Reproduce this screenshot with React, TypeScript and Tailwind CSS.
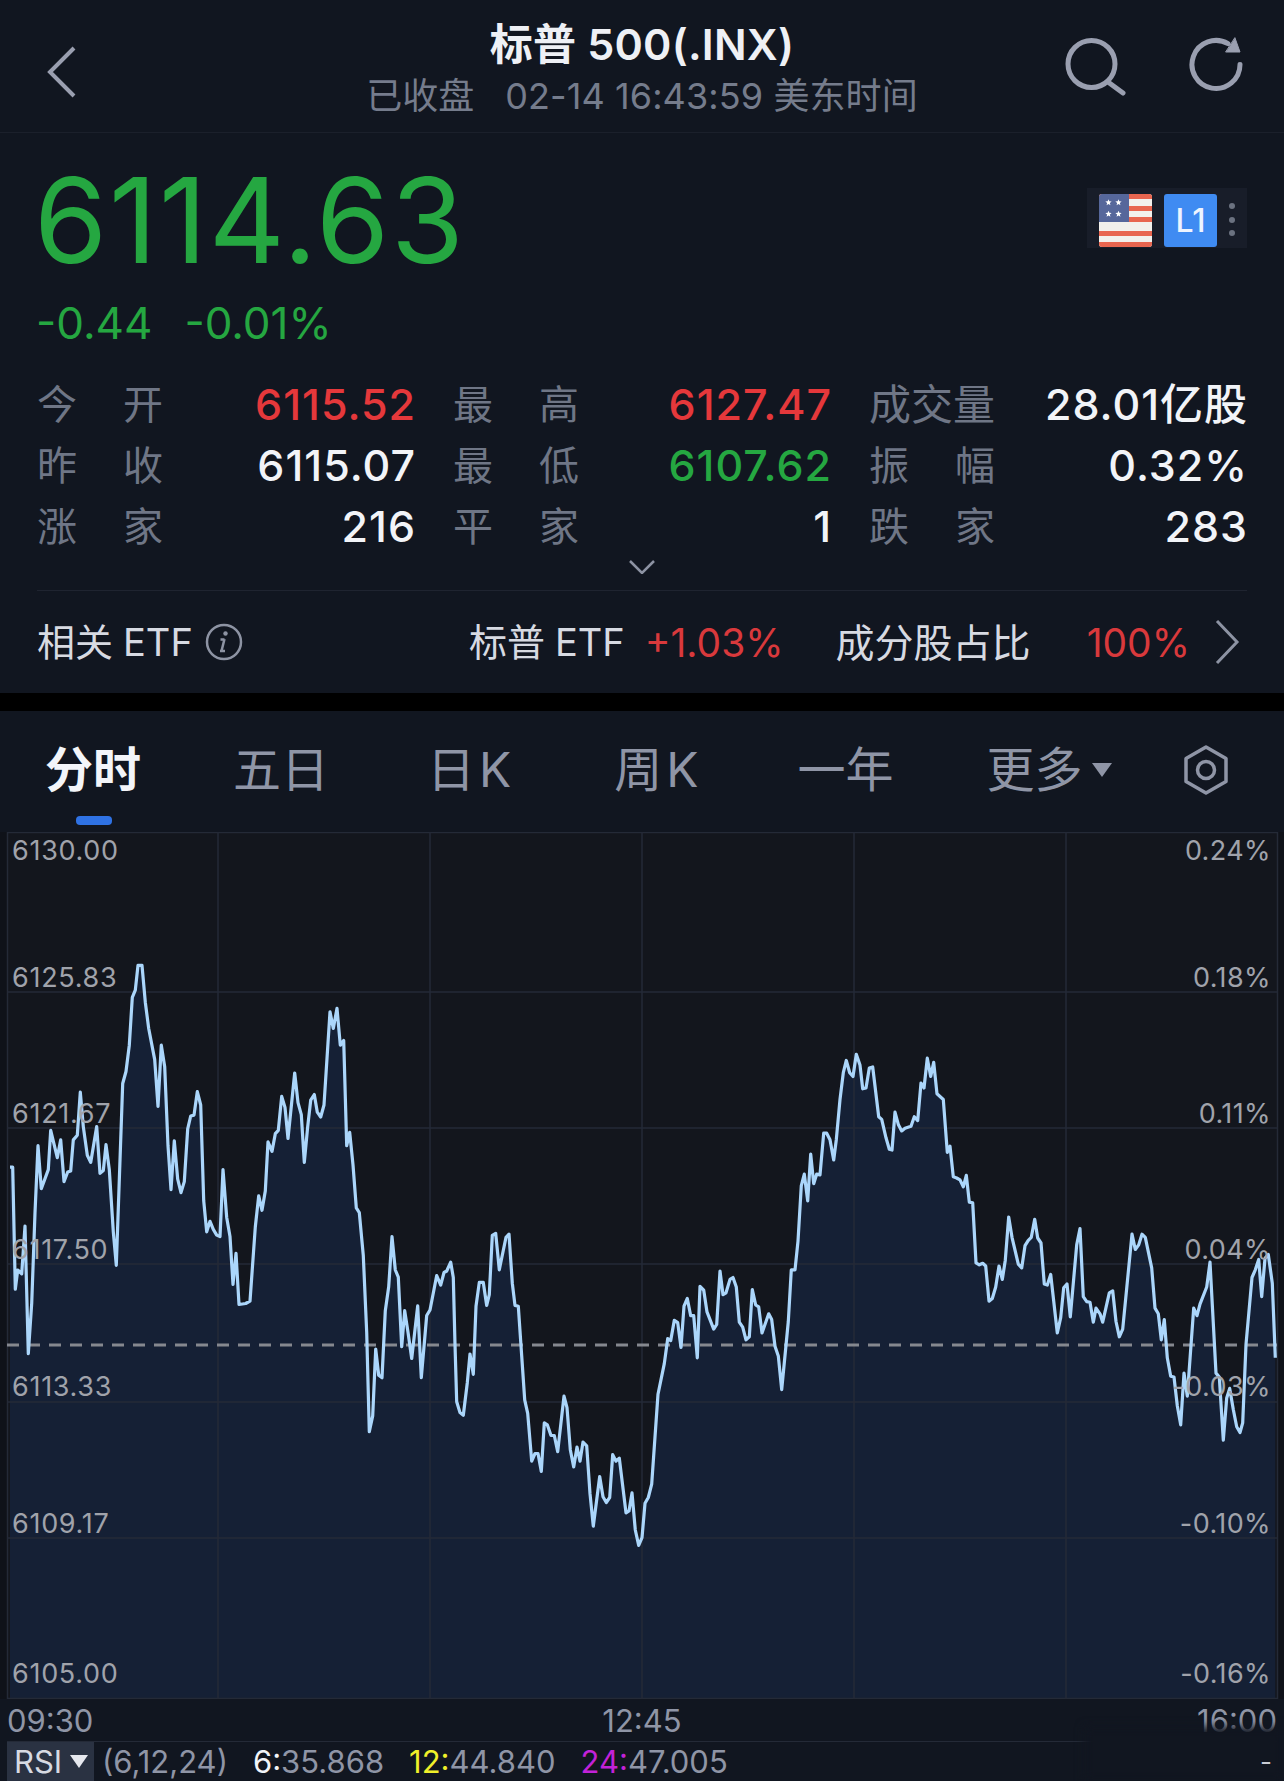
import React from "react";

const FONT = 'font-["Inter","Noto_Sans_CJK_SC",sans-serif]';

const z3 = [[30,705],[38,705],[46,960],[53,920],[65,928],[75,828],[85,1095],[95,990],[105,800],[114,660],[124,750],[145,710],[152,628],[172,685],[182,648],[192,735],[203,715],[212,713],[220,648],[232,638],[241,548],[250,620],[262,680],[272,695],[290,620],[300,718],[310,712],[318,658],[328,710],[340,840],[349,910],[368,530],[378,505],[388,450],[397,350],[406,335],[414,283],[426,283],[436,360],[446,415],[464,480],[474,578],[484,450],[494,495],[504,660],[513,752],[523,650],[533,730],[543,758],[553,735],[563,625],[572,598],[582,596],[592,547],[602,575],[611,775],[620,840],[630,818],[640,835],[650,847],[660,850],[669,710],[680,810],[690,850],[699,950],[708,885],[717,992],[737,990],[750,985],[766,830],[776,765],[786,795],[796,755],[804,652],[816,672],[826,635],[835,628],[845,557],[855,580],[864,645],[884,508],[894,570],[904,595],[913,695],[923,620],[932,565],[943,553],[952,590],[962,600],[972,575],[990,380],[1000,415],[1011,373],[1021,450],[1031,440],[1040,660],[1049,632],[1059,700],[1069,790],[1078,800],[1090,890],[1100,1050],[1108,1258],[1118,1225],[1127,1085],[1136,1140],[1146,1145],[1156,1005],[1166,955],[1176,850],[1186,920],[1195,935],[1205,1080],[1214,1005],[1224,1050],[1235,1105],[1253,995],[1264,1145],[1280,1015]];
const z4 = [[0,810],[20,720],[32,745],[42,712],[50,708],[62,685],[70,725],[75,900],[80,1050],[90,1078],[100,1085],[112,1000],[120,925],[130,978],[138,800],[148,738],[160,738],[170,798],[178,770],[187,615],[197,610],[208,705],[228,620],[237,612],[247,740],[255,798],[265,800],[275,930],[284,1045],[293,1080],[305,1205],[315,1185],[324,1185],[334,1232],[343,1105],[352,1110],[363,1138],[373,1138],[383,1180],[402,1035],[411,1065],[421,1175],[431,1220],[441,1168],[450,1205],[459,1155],[470,1165],[480,1290],[490,1375],[509,1245],[519,1298],[529,1313],[539,1300],[548,1188],[558,1205],[568,1197],[588,1340],[597,1335],[606,1288],[616,1385],[626,1425],[636,1405],[645,1315],[655,1300],[665,1265],[684,1030],[703,950],[713,885],[722,890],[733,837],[743,843],[753,908],[762,800],[772,780],[782,825],[791,825],[802,935],[810,748],[821,758],[831,815],[851,860],[860,848],[870,708],[879,770],[888,765],[900,730],[909,725],[919,750],[928,842],[938,855],[948,888],[958,880],[967,757],[977,797],[986,802],[996,870],[1016,820],[1025,835],[1035,905],[1045,930],[1055,1018],[1075,840],[1084,705],[1095,705],[1104,630],[1114,485],[1123,455],[1133,525],[1142,403],[1151,480],[1160,455],[1170,457],[1181,348],[1190,348],[1200,365],[1211,418],[1219,365],[1230,260],[1240,190],[1249,158],[1259,190],[1269,200],[1279,142]];
const z5 = [[0,170],[8,232],[18,230],[28,178],[38,175],[56,305],[65,312],[78,360],[88,390],[96,392],[105,293],[115,325],[125,342],[135,335],[153,330],[163,305],[173,315],[183,217],[192,230],[202,152],[212,200],[221,163],[231,245],[250,260],[262,398],[270,382],[280,462],[290,465],[300,470],[310,488],[319,458],[328,528],[338,530],[348,687],[358,692],[368,688],[377,695],[387,787],[397,780],[407,750],[417,695],[427,730],[436,680],[446,567],[456,620],[475,690],[485,700],[495,642],[505,628],[514,620],[524,573],[533,622],[543,635],[553,742],[562,745],[572,717],[592,870],[602,830],[611,752],[621,742],[631,828],[650,640],[660,597],[670,775],[680,788],[690,790],[700,842],[708,805],[720,820],[728,842],[748,765],[758,760],[768,840],[778,880],[788,860],[816,612],[826,652],[836,640],[846,612],[856,620],[875,700],[885,805],[895,820],[904,888],[913,835],[922,935],[932,983],[942,985],[952,1060],[962,1110],[972,975],[982,1035],[1001,805],[1011,825],[1020,795],[1040,750],[1050,685],[1068,975],[1078,985],[1090,1150],[1100,1040],[1109,1015],[1120,1070],[1130,1115],[1140,1130],[1148,1105],[1158,900],[1176,725],[1186,705],[1196,678],[1205,775],[1215,675],[1225,665],[1237,740],[1246,935]];

const pts: [number, number][] = [
  ...z3.map(([x, y]): [number, number] => [x / 3, 830 + y / 2.0907]),
  ...z4.map(([x, y]): [number, number] => [430 + x / 3, 1000 + y / 2.613]),
  ...z5.map(([x, y]): [number, number] => [860 + x / 3, 1000 + y / 2.613]),
];
const linePath = pts.map(([x, y], i) => `${i ? "L" : "M"}${x.toFixed(1)} ${y.toFixed(1)}`).join(" ");
const areaPath = `${linePath} L${pts[pts.length - 1][0].toFixed(1)} 1699 L${pts[0][0].toFixed(1)} 1699 Z`;

const hLines = [992, 1128, 1264, 1402, 1538];
const vLines = [218, 430, 642, 854, 1066];

function Label({ a, b }: { a: string; b?: string }) {
  if (!b) return <span className="w-[126px] text-[#6f7686] text-[42px] leading-none">{a}</span>;
  return (
    <span className="w-[126px] flex justify-between text-[#6f7686] text-[40px] leading-none">
      <span>{a}</span>
      <span>{b}</span>
    </span>
  );
}

function Stat({ a, b, value, color }: { a: string; b?: string; value: string; color: string }) {
  return (
    <div className="flex items-center justify-between h-[61px]">
      <Label a={a} b={b} />
      <span className={`text-[43px] font-medium leading-none tracking-[1px] -mr-[1px] ${color}`}>{value}</span>
    </div>
  );
}

function Star({ x, y }: { x: number; y: number }) {
  const points = [0, 1, 2, 3, 4, 5, 6, 7, 8, 9]
    .map((i) => {
      const r = i % 2 ? 1.4 : 3.3;
      const t = -Math.PI / 2 + (i * Math.PI) / 5;
      return `${(x + r * Math.cos(t)).toFixed(2)},${(y + r * Math.sin(t)).toFixed(2)}`;
    })
    .join(" ");
  return <polygon points={points} fill="#fff" />;
}

function Flag() {
  return (
    <svg width="53" height="53" viewBox="0 0 53 53" className="rounded-[3px]">
      <rect width="53" height="53" fill="#f2f0ec" />
      {[0, 12, 23, 37, 48].map((y) => (
        <rect key={y} y={y} width="53" height={5} fill="#e8654f" />
      ))}
      <rect width="30" height="28" fill="#56679b" />
      <Star x={9.5} y={8.5} />
      <Star x={19.5} y={8.5} />
      <Star x={9.5} y={20} />
      <Star x={19.5} y={20} />
    </svg>
  );
}

export default function App() {
  return (
    <div className={`relative w-[1284px] h-[1781px] overflow-hidden bg-[#000] text-white ${FONT}`}>
      <section className="bg-[#111620] h-[693px] flex flex-col">
        <header className="h-[133px] border-b border-[#1b202b] grid grid-cols-[1fr_auto_1fr] items-center px-[40px] shrink-0">
          <svg width="34" height="54" viewBox="0 0 34 54" fill="none" stroke="#9a9fb0" strokeWidth="4" className="mt-[12px] ml-[5px]">
            <path d="M29 3 L5 27 L29 51" />
          </svg>
          <div className="flex flex-col items-center">
            <div className="text-[43px] font-semibold leading-none text-[#eef0f5] mt-[5px] tracking-[0.2px]">标普 500(.INX)</div>
            <div className="text-[36px] leading-none text-[#757c8c] mt-[12px] whitespace-pre tracking-[0.1px]">已收盘   02-14 16:43:59 美东时间</div>
          </div>
          <div className="flex justify-end items-start gap-[60px] self-start mt-[36px]">
            <svg width="64" height="64" viewBox="0 0 64 64" fill="none" stroke="#9a9fb0" strokeWidth="5" strokeLinecap="round">
              <circle cx="27.5" cy="28" r="23.5" />
              <path d="M44 46 L59 57" />
            </svg>
            <svg width="56" height="56" viewBox="0 0 56 56" fill="none" stroke="#9a9fb0" strokeWidth="5" strokeLinecap="round">
              <path d="M52 28.5 A24 24 0 1 1 40 7.7" />
              <path d="M47 2 L52 16 L38 16 Z" fill="#9a9fb0" stroke="#9a9fb0" strokeWidth="1" />
            </svg>
          </div>
        </header>

        <div className="relative px-[37px] pt-[28px] h-[168px] shrink-0">
          <div className="text-[118px] leading-none text-[#25a741] tracking-[1.9px] -ml-[3px]">6114.63</div>
          <div className="flex gap-[32px] text-[44px] leading-none text-[#25a741] mt-[22px] -ml-[1px]">
            <span>-0.44</span>
            <span>-0.01%</span>
          </div>
          <div className="absolute right-[37px] top-[55px] w-[160px] h-[60px] bg-[#181d29] flex items-start pt-[6px] pl-[12px] gap-[12px]">
            <Flag />
            <div className="w-[53px] h-[53px] rounded-[3px] bg-[#3f8bf2] flex items-center justify-center text-[32px] font-medium leading-none text-[#eef4ff]">L1</div>
            <div className="flex flex-col gap-[7.5px] pt-[9px]">
              <span className="w-[6px] h-[6px] rounded-full bg-[#6b7280]" />
              <span className="w-[6px] h-[6px] rounded-full bg-[#6b7280]" />
              <span className="w-[6px] h-[6px] rounded-full bg-[#6b7280]" />
            </div>
          </div>
        </div>

        <div className="grid grid-cols-3 gap-x-[38px] px-[37px] pt-[73px]">
          <Stat a="今" b="开" value="6115.52" color="text-[#e5383b]" />
          <Stat a="最" b="高" value="6127.47" color="text-[#e5383b]" />
          <Stat a="成交量" value="28.01亿股" color="text-[#f2f4f8]" />
          <Stat a="昨" b="收" value="6115.07" color="text-[#f2f4f8]" />
          <Stat a="最" b="低" value="6107.62" color="text-[#25a741]" />
          <Stat a="振" b="幅" value="0.32%" color="text-[#f2f4f8]" />
          <Stat a="涨" b="家" value="216" color="text-[#f2f4f8]" />
          <Stat a="平" b="家" value="1" color="text-[#f2f4f8]" />
          <Stat a="跌" b="家" value="283" color="text-[#f2f4f8]" />
        </div>

        <div className="flex justify-center h-[33px] pt-[3px]">
          <svg width="26" height="14" viewBox="0 0 26 14" fill="none" stroke="#8d93a3" strokeWidth="2.5">
            <path d="M1 1 L13 13 L25 1" />
          </svg>
        </div>

        <div className="mx-[37px] border-t border-[#1f2430] flex-1 flex items-center text-[39px] leading-none text-[#d7dae2]">
          <span className="text-[38px]">相关</span>
          <span className="text-[38px] ml-[10px]">ETF</span>
          <svg width="38" height="38" viewBox="0 0 38 38" fill="none" className="ml-[12px]">
            <circle cx="19" cy="19" r="17" stroke="#8d93a3" strokeWidth="2.5" />
            <circle cx="20.5" cy="10.5" r="2.2" fill="#8d93a3" />
            <path d="M19.5 16 L16.5 28 M15.5 16.5 H19.5 M15 28 H20" stroke="#8d93a3" strokeWidth="2.5" />
          </svg>
          <span className="text-[38px] ml-auto">标普</span>
          <span className="text-[38px] ml-[10px]">ETF</span>
          <span className="ml-[20px] text-[#d9393c]">+1.03%</span>
          <span className="ml-[52px]">成分股占比</span>
          <span className="ml-[56px] text-[#d9393c]">100%</span>
          <svg width="26" height="46" viewBox="0 0 26 46" fill="none" stroke="#8d93a3" strokeWidth="3" className="ml-[24px] mr-[7px]">
            <path d="M3 2 L23 23 L3 44" />
          </svg>
        </div>
      </section>

      <section className="mt-[18px] h-[1070px] bg-[#111620] flex flex-col">
        <nav className="relative h-[121px] shrink-0 flex items-center pb-[4px] text-[48px] leading-none text-[#8f95a6]">
          <span className="ml-[45px] font-semibold text-[#f3f5f9]">分时</span>
          <span className="ml-[92px]">五日</span>
          <span className="ml-[98px] flex"><span>日</span><span className="ml-[4px]">K</span></span>
          <span className="ml-[103px] flex"><span>周</span><span className="ml-[4px]">K</span></span>
          <span className="ml-[99px]">一年</span>
          <span className="ml-[93px]">更多</span>
          <svg width="20" height="14" viewBox="0 0 20 14" className="ml-[9px]">
            <path d="M0 0 H20 L10 14 Z" fill="#8f95a6" />
          </svg>
          <svg width="46" height="52" viewBox="0 0 46 52" fill="none" stroke="#8f95a6" strokeWidth="3.5" strokeLinejoin="round" className="ml-[71px]">
            <path d="M23 3 L43 14.5 V37.5 L23 49 L3 37.5 V14.5 Z" />
            <circle cx="23" cy="26" r="8.5" />
          </svg>
          <span className="absolute left-[76px] top-[105px] w-[36px] h-[9px] rounded-[4px] bg-[#2f72e4]" />
        </nav>

        <div className="relative h-[867px] shrink-0 bg-[#13161d] text-[27px] leading-none tracking-[0.4px] text-[#a0a3ab]">
          <svg className="absolute inset-0" width="1284" height="867" viewBox="0 832 1284 867" fill="none">
            <rect x="0" y="832" width="7" height="867" fill="#0f1219" />
            <rect x="1277" y="832" width="7" height="867" fill="#0f1219" />
            <path d={areaPath} fill="#152035" stroke="none" />
            <rect x="7.5" y="832.5" width="1270" height="866" stroke="#242a37" strokeWidth="1.5" />
            {hLines.map((y) => (
              <line key={y} x1="7" x2="1277" y1={y} y2={y} stroke="#242a37" strokeWidth="1.5" />
            ))}
            {vLines.map((x) => (
              <line key={x} x1={x} x2={x} y1="832" y2="1699" stroke="#242a37" strokeWidth="1.5" />
            ))}
            <line x1="7" x2="1277" y1="1345" y2="1345" stroke="#85888f" strokeWidth="3" strokeDasharray="12 9" />
            <path d={linePath} stroke="#abd6fb" strokeWidth="3.2" strokeLinejoin="round" />
          </svg>
          <span className="absolute left-[12px] top-[5px] tracking-[0.7px]">6130.00</span>
          <span className="absolute left-[12px] top-[132px] tracking-[0.7px]">6125.83</span>
          <span className="absolute left-[12px] top-[268px] tracking-[0.7px]">6121.67</span>
          <span className="absolute left-[12px] top-[404px] tracking-[0.7px]">6117.50</span>
          <span className="absolute left-[12px] top-[541px] tracking-[0.7px]">6113.33</span>
          <span className="absolute left-[12px] top-[678px] tracking-[0.7px]">6109.17</span>
          <span className="absolute left-[12px] top-[828px] tracking-[0.7px]">6105.00</span>
          <span className="absolute right-[13px] top-[5px]">0.24%</span>
          <span className="absolute right-[13px] top-[132px]">0.18%</span>
          <span className="absolute right-[13px] top-[268px]">0.11%</span>
          <span className="absolute right-[13px] top-[404px]">0.04%</span>
          <span className="absolute right-[13px] top-[541px]">-0.03%</span>
          <span className="absolute right-[13px] top-[678px]">-0.10%</span>
          <span className="absolute right-[13px] top-[828px]">-0.16%</span>
        </div>

        <div className="h-[42px] shrink-0 grid grid-cols-3 items-center px-[7px] text-[31px] leading-none text-[#8f95a6]">
          <span>09:30</span>
          <span className="text-center">12:45</span>
          <span className="text-right">16:00</span>
        </div>

        <div className="h-[40px] shrink-0 mx-[7px] border-t border-[#242a37] flex items-center text-[31px] leading-none text-[#8f95a6]">
          <span className="h-full w-[87px] bg-[#2a3242] flex items-center pl-[7px] text-[#d7dae2]">
            RSI
            <svg width="18" height="13" viewBox="0 0 18 13" className="ml-[8px]">
              <path d="M0 0 H18 L9 13 Z" fill="#e6e8ee" />
            </svg>
          </span>
          <span className="ml-[8px]">(6,12,24)</span>
          <span className="ml-[25px]"><span className="text-[#f2f4f8]">6:</span>35.868</span>
          <span className="ml-[25px]"><span className="text-[#f0f02a]">12:</span>44.840</span>
          <span className="ml-[25px]"><span className="text-[#c222d8]">24:</span>47.005</span>
        </div>
      </section>

      <div className="absolute right-0 bottom-0 w-[200px] h-[54px] bg-[#111620] blur-[5px]" />
      <span className="absolute right-[12px] bottom-[6px] text-[26px] leading-none text-[#c9ccd4]">-</span>
    </div>
  );
}
